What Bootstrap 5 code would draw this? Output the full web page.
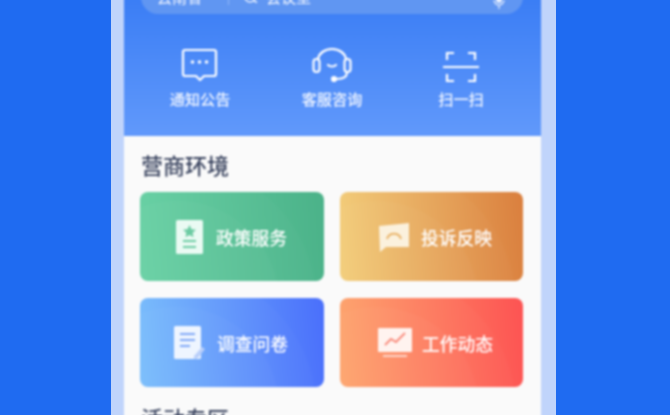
<!DOCTYPE html>
<html lang="zh-CN">
<head>
    <meta charset="UTF-8">
    <meta name="viewport" content="width=device-width, initial-scale=1.0">
    <title>营商环境</title>
    <link href="https://cdn.jsdelivr.net/npm/bootstrap@5.3.0/dist/css/bootstrap.min.css" rel="stylesheet">
    <style>
        html, body { height: 100%; overflow: hidden; }
        body {
            background: #1f6bf1;
            font-family: "Noto Sans CJK SC", "Liberation Sans", sans-serif;
        }
        .phone-frame {
            width: 445px;
            height: 415px;
            margin-left: 111px;
            padding: 0 15px 0 13px;
            background: #c0d4fb;
            overflow: hidden;
        }
        .phone-screen { height: 423px; margin-top: -4px; background: #fafafa; filter: blur(.9px); }
        .top-area {
            display: flow-root;
            height: 140px;
            background: linear-gradient(180deg, #3a7df5 0%, #6199fb 100%);
        }
        .search-pill {
            height: 34px;
            margin: -16px 18px 0 17px;
            padding: 0 18px 0 16px;
            border-radius: 17px;
            background: #6096f2;
            color: #f0f5ff;
            font-size: 15px;
        }
        .pill-sep { width: 1px; height: 16px; background: #8fb6f7; margin: 0 14px 0 26px; }
        .quick-row { padding: 34px 0 0 10px; }
        .quick-item { width: 132px; color: #f3f7ff; font-size: 15.2px; line-height: 20px; font-weight: 500; }
        .quick-last { width: 126px; }
        .quick-item svg { display: block; margin-bottom: 6px; }
        .sect-title { font-size: 22px; line-height: 30px; color: #3b4560; margin: 13px 0 13px 17px; font-weight: 500; }
        .tile-grid {
            display: grid;
            grid-template-columns: 184px 183px;
            grid-auto-rows: 89px;
            column-gap: 16px;
            row-gap: 17px;
            margin-left: 16px;
        }
        .tile {
            border-radius: 8px;
            color: #fff;
            font-size: 17.8px;
            font-weight: 500;
            padding-top: 1px;
        }
        .tile-green { padding-left: 36px; gap: 13px; background: radial-gradient(circle at 20% 125%, rgba(255,255,255,.025) 55%, transparent 56%), radial-gradient(circle at 20% 125%, rgba(255,255,255,.02) 75%, transparent 76%), linear-gradient(85deg, #66d0a3, #4bb289); }
        .tile-orange { padding-left: 38px; gap: 11px; background: radial-gradient(circle at 20% 125%, rgba(255,255,255,.025) 55%, transparent 56%), radial-gradient(circle at 20% 125%, rgba(255,255,255,.02) 75%, transparent 76%), linear-gradient(85deg, #f3cd78, #da7f3e); }
        .tile-blue { padding-left: 33px; gap: 12px; background: radial-gradient(circle at 20% 125%, rgba(255,255,255,.025) 55%, transparent 56%), radial-gradient(circle at 20% 125%, rgba(255,255,255,.02) 75%, transparent 76%), linear-gradient(85deg, #78bdfb, #4a6ffb); }
        .tile-red { padding-left: 38px; gap: 10px; background: radial-gradient(circle at 20% 125%, rgba(255,255,255,.025) 55%, transparent 56%), radial-gradient(circle at 20% 125%, rgba(255,255,255,.02) 75%, transparent 76%), linear-gradient(85deg, #fda46c, #fd5353); }
        .sect-next { margin-top: 15px; }
    </style>
</head>
<body>
    <div class="phone-frame">
        <div class="phone-screen">
            <div class="top-area">
                <div class="search-pill d-flex align-items-center">
                    <span>云南省</span>
                    <div class="pill-sep"></div>
                    <svg width="15" height="15" viewBox="0 0 15 15" fill="none" stroke="#e6efff" stroke-width="1.6" class="me-2"><circle cx="7" cy="7" r="5"/><path d="M10.500 10.500l3.500 2"/></svg>
                    <span>会议室</span>
                    <svg width="12" height="16" viewBox="0 0 12 16" fill="#e6efff" class="ms-auto mt-2"><rect x="3" y="0" width="6" height="10" rx="3"/><path d="M1 7a5 5 0 0 0 10 0M6 12v4" fill="none" stroke="#e6efff" stroke-width="1.2"/></svg>
                </div>
                <div class="quick-row d-flex">
                    <div class="quick-item d-flex flex-column align-items-center">
                        <svg width="38" height="34" viewBox="0 0 38 34" fill="none" stroke="#fff" stroke-width="2.200" stroke-linejoin="round">
                            <path d="M4 2h29a2 2 0 0 1 2 2v22a2 2 0 0 1-2 2h-10l-4 4-4-4H4a2 2 0 0 1-2-2V4a2 2 0 0 1 2-2z"/>
                            <circle cx="11.500" cy="14" r="1.800" fill="#fff" stroke="none"/><circle cx="18.500" cy="14" r="1.800" fill="#fff" stroke="none"/><circle cx="25.500" cy="14" r="1.800" fill="#fff" stroke="none"/>
                        </svg>
                        <div>通知公告</div>
                    </div>
                    <div class="quick-item d-flex flex-column align-items-center">
                        <svg width="40" height="34" viewBox="0 0 40 34" fill="none" stroke="#fff" stroke-width="2.200" stroke-linecap="round">
                            <path d="M6 11C7 5 13 1 20 1s13 4 14 10"/>
                            <rect x="1.500" y="11" width="6" height="13" rx="3"/><rect x="32.500" y="11" width="6" height="13" rx="3"/>
                            <path d="M35 24c0 4-3 7-10 7"/><circle cx="22" cy="31" r="2" fill="#fff"/>
                            <path d="M16 17c2 2 6 2 8 0"/>
                        </svg>
                        <div>客服咨询</div>
                    </div>
                    <div class="quick-item quick-last d-flex flex-column align-items-center">
                        <svg width="36" height="34" viewBox="0 0 36 34" fill="none" stroke="#fff" stroke-width="2.200">
                            <path d="M11 5H4v7M25 5h7v7M4 26v7h7M32 26v7h-7"/><path d="M0 19h36" stroke-width="2"/>
                        </svg>
                        <div>扫一扫</div>
                    </div>
                </div>
            </div>
            <div class="sect-title">营商环境</div>
            <div class="tile-grid">
                <div class="tile tile-green d-flex align-items-center">
                    <svg width="27" height="34" viewBox="0 0 27 34"><rect width="27" height="34" rx="1.500" fill="#eafaf3"/><path d="M13.500 5l2 4.200 4.500.6-3.300 3 .8 4.500-4-2.200-4 2.200.8-4.500-3.300-3 4.500-.6z" fill="#6bcba2"/><path d="M7 21h13M7 27h13" stroke="#6bcba2" stroke-width="2"/></svg>
                    <span>政策服务</span>
                </div>
                <div class="tile tile-orange d-flex align-items-center">
                    <svg width="32" height="32" viewBox="0 0 32 32"><path d="M1 5l30-3v24H8l-6 5z" fill="#fbf1dd"/><path d="M9 18c2-7 12-7 14 0" fill="none" stroke="#eab56c" stroke-width="2"/></svg>
                    <span>投诉反映</span>
                </div>
                <div class="tile tile-blue d-flex align-items-center">
                    <svg width="32" height="34" viewBox="0 0 32 34"><rect x="1" width="27" height="33" rx="1.500" fill="#eef5ff"/><path d="M7 8h15M7 14h15M7 20h10" stroke="#7ea7f6" stroke-width="2"/><path d="M21 30l8-9 3 2-7 9-4 1z" fill="#b9cffa"/></svg>
                    <span>调查问卷</span>
                </div>
                <div class="tile tile-red d-flex align-items-center">
                    <svg width="34" height="30" viewBox="0 0 34 30"><rect width="34" height="24" rx="1" fill="#fff3ef"/><path d="M7 17l6-6 5 3 9-9" fill="none" stroke="#f98a7a" stroke-width="1.800"/><path d="M5 28h24" stroke="#fdd5c9" stroke-width="2"/></svg>
                    <span>工作动态</span>
                </div>
            </div>
            <div class="sect-title sect-next">活动专区</div>
        </div>
    </div>
</body>
</html>
